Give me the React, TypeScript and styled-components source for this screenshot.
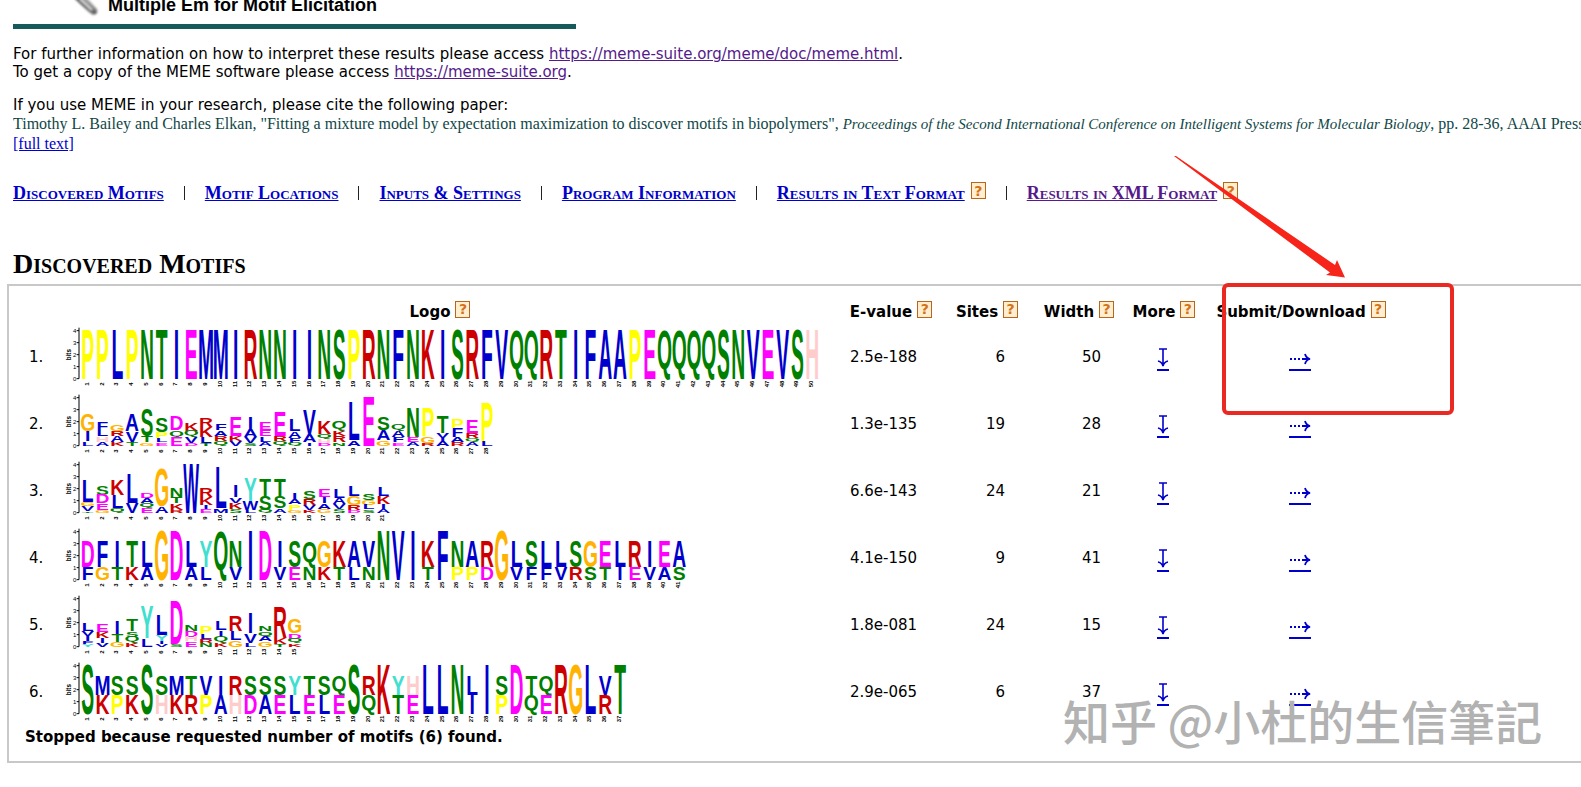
import React from "react";
import styled, { createGlobalStyle } from "styled-components";

const SANS = `"DejaVu Sans", Verdana, sans-serif`;
const SERIF = `"Liberation Serif", "Times New Roman", serif`;

const GlobalStyle = createGlobalStyle`
  *, *::before, *::after { box-sizing: border-box; }
  body {
    margin: 0;
    background: #fff;
    color: #000;
    font: 15px/18px ${SANS};
    overflow-x: hidden;
  }
`;

const Page = styled.main`
  position: relative;
  min-height: 100vh;
  overflow: hidden;
`;

const Intro = styled.div`
  padding-left: 13px;
`;

const Brand = styled.header`
  display: flex;
  align-items: flex-start;
  height: 24px;
  padding-left: 59px;
`;

const Tagline = styled.p`
  margin: 0 0 0 8px;
  font: bold 18px/10px "Liberation Sans", Arial, sans-serif;
  white-space: nowrap;
`;

const Rule = styled.div`
  width: 563px;
  max-width: 100%;
  height: 5px;
  margin-bottom: 1px;
  background: #165a5a;
`;

const Paragraph = styled.p`
  margin: 0;
  padding-top: 15px;
  white-space: nowrap;
`;

const Citation = styled.div`
  font: 16px/19px ${SERIF};
  color: #0f4747;
  white-space: nowrap;

  em { font-size: 15px; }
`;

const Link = styled.a<{ $visited?: boolean }>`
  color: ${(p) => (p.$visited ? "#551a8b" : "#0000cc")};
  text-decoration: underline;
`;

const Nav = styled.nav`
  display: flex;
  align-items: center;
  gap: 20px;
  height: 24px;
  margin-top: 28px;
  white-space: nowrap;
`;

const NavItem = styled.span`
  display: flex;
  align-items: center;
  gap: 6px;

  a {
    font: bold small-caps 18px/20px ${SERIF};
  }
`;

const Divider = styled.span`
  width: 1px;
  height: 14px;
  background: #222;
`;

const Heading = styled.h2`
  margin: 44px 0 0;
  font: bold small-caps 28px/30px ${SERIF};
`;

const HelpButton = styled.button`
  width: 15px;
  height: 17px;
  margin: 0 0 5px;
  padding: 0;
  border: 1px solid #b9651b;
  background: #ffefd0;
  color: #d2731a;
  font: bold 14px/14px ${SANS};
  cursor: pointer;
`;

const Panel = styled.section`
  margin: 5px 0 0 7px;
  padding: 0 0 14px 16px;
  border: 2px solid #c8c8c8;
  border-right: 0;
`;

const MotifTable = styled.table`
  width: 1374px;
  table-layout: fixed;
  border-collapse: collapse;

  th, td { padding: 0; }
  th:nth-child(2) { padding-right: 26px; }
  thead tr { height: 37px; }
  tbody tr { height: 67px; }
`;

const HeadLabel = styled.span`
  display: flex;
  align-items: center;
  justify-content: center;
  gap: 5px;
  padding-top: 14px;
  white-space: nowrap;
`;

const Cell = styled.td<{ $align?: string; $end?: number; $start?: number }>`
  && {
    text-align: ${(p) => p.$align ?? "left"};
    padding-right: ${(p) => p.$end ?? 0}px;
    padding-left: ${(p) => p.$start ?? 0}px;
  }
`;

const ArrowLink = styled.a`
  display: flex;
  justify-content: center;
  padding: 6px 2px 0 0;
  color: #0000cc;
`;

const Notice = styled.p`
  margin: 2px 0 0;
  line-height: 20px;
  font-weight: bold;
`;

const Highlight = styled.div`
  position: absolute;
  left: 1222px;
  top: 283px;
  width: 232px;
  height: 132px;
  border: 4px solid #ea2a22;
  border-radius: 6px;
  pointer-events: none;
`;

const Pointer = styled.svg`
  position: absolute;
  left: 1170px;
  top: 152px;
  pointer-events: none;
`;

const Watermark = styled.div`
  position: absolute;
  left: 1063px;
  top: 692px;
  font: 500 47px/56px "Noto Sans CJK SC", sans-serif;
  color: #b2b2b2;
  white-space: nowrap;
  pointer-events: none;
`;

const LogoDrawing = styled.svg`
  display: block;
  overflow: visible;
`;

const RESIDUE: Record<string, string> = {
  A: "#0000cc", C: "#0000cc", F: "#0000cc", I: "#0000cc", L: "#0000cc", V: "#0000cc", W: "#0000cc", M: "#0000cc",
  N: "#008000", Q: "#008000", S: "#008000", T: "#008000",
  D: "#ff00ff", E: "#ff00ff",
  K: "#cc0000", R: "#cc0000",
  H: "#ffcccc", G: "#ffb300", P: "#ffff00", Y: "#40e0d0",
};

/* One logo unit is a third of a pixel; 36 units are one bit. */
const PITCH = 44.36;
const FULL = 146;
const BASE = 167;
const AXIS = 42;
const GLYPH = 100;
const CAP = 68.8;
/* The tail of Q hangs below the baseline and counts towards its height. */
const TAIL = 18;

type Stack = [string, number][];

const single = (s: string): Stack[] => [...s].map((c) => [[c, FULL]]);
const pairs = (s: string, top: number, low: number): Stack[] =>
  s.split(" ").map((c) => (c.length === 1 ? [[c, FULL]] : [[c[0], top], [c[1], low]]));
const stacks = (s: string): Stack[] =>
  s.split("|").map((col) => col.trim().split(" ").map((t) => [t[0], Number(t.slice(1))] as [string, number]));

function SequenceLogo({ columns, label }: { columns: Stack[]; label: string }) {
  const width = Math.ceil((AXIS + 4 + columns.length * PITCH) / 3);
  return (
    <LogoDrawing width={width} height={67} viewBox={`0 0 ${width * 3} 201`} role="img" aria-label={label}>
      <g fontFamily="Liberation Sans, Arial, sans-serif" fontWeight="bold" textAnchor="middle">
        <path d={`M${AXIS} 14V${BASE}`} stroke="#000" strokeWidth="3" />
        <text transform="translate(17 95) rotate(-90)" fontSize="19">bits</text>
        {[0, 1, 2, 3, 4].map((n) => (
          <React.Fragment key={n}>
            <path d={`M${AXIS - 7} ${BASE - n * 36}h7`} stroke="#000" strokeWidth="3" />
            <text x={AXIS - 13} y={BASE - n * 36 + 6} fontSize="18" fontWeight="normal">{n}</text>
          </React.Fragment>
        ))}
        {columns.map((stack, i) => {
          const x = AXIS + 4 + (i + 0.5) * PITCH;
          let y = BASE - stack.reduce((sum, s) => sum + s[1], 0);
          return (
            <g key={i}>
              {stack.map(([c, h], k) => {
                y += h;
                const tail = c === "Q" ? TAIL : 0;
                const sx = c === "W" ? 0.5 : 0.58;
                const sy = (h - 1) / (CAP + tail);
                return (
                  <text key={k} transform={`translate(${x} ${y - tail * sy}) scale(${sx} ${sy})`} fontSize={GLYPH} fill={RESIDUE[c]}>
                    {c}
                  </text>
                );
              })}
              <text transform={`translate(${x + 3} ${BASE + 16}) rotate(-90)`} fontSize="18">{i + 1}</text>
            </g>
          );
        })}
      </g>
    </LogoDrawing>
  );
}

const MOTIFS = [
  { evalue: "2.5e-188", sites: 6, width: 50, columns: single("PPLPNTIEMMIRNNIINSPRNFNKISRFVQQRTIFAAPEQQQQSNVEVSH") },
  {
    evalue: "1.3e-135", sites: 19, width: 28,
    columns: stacks(
      "G50 I30 L13|F24 L18 H16 A12|G18 R14 A18 K12|A50 V32 T12|S80 T20 G10|S44 P20 L12 E10|D42 Q20 E26|K24 Q18 V18 D9|R28 K30 L18 T8|F20 A16 R16 Q14|E58 K14 V14|I38 A22 V18 S8|E24 E20 L16 A12|E72 R14 Q14|L36 A20 F16 Q8|V74 A24 I10|K38 Q14 H12 D9|Q28 K16 R18 N10|L116 A16|E146|S38 A30 G16|Q20 A20 F16 E10|N90 E14 A12|P84 G20 R9|T50 V16 I8 A14|P26 F26 A14 R12|E38 R14 Q12 A12|P116 L14"
    ),
  },
  {
    evalue: "6.6e-143", sites: 24, width: 21,
    columns: stacks(
      "L64 G12 V14 T6|S28 D26 E20 G8|K46 L40 Q14|L90 V30|D14 A16 Q14 E14|G110 A20|N28 T20 K20 R8|W147|R26 K24 I12 E12|L122 M13|I34 V16 K18 S12|Y70 W26 L9|T52 S42 Q9|T54 S34 A13|I18 A16 P16 G9|S24 R18 V14 K9|E22 I20 A16 G12|L26 A18 V14 S12|L32 G26 R14 D9|S18 G14 L14 S10|L28 K24 I14 A12"
    ),
  },
  {
    evalue: "4.1e-150", sites: 9, width: 41,
    columns: pairs("DF FG IT TK LA G D LA YL Q NV I D IV SE QN GK KT AL VN N V I KT F NP AP RD G LV SF LF LV SR GS ET LI RE IV EA AS", 78, 38),
  },
  {
    evalue: "1.8e-081", sites: 24, width: 15,
    columns: stacks(
      "L24 V16 I14 F10 Y8|E24 K18 I14 V12|I40 T24 G14|T34 S16 Q18 K12|Y96 L25|L60 Y18 I10 V8|D132 S7|N18 D18 H14 E16|P24 L14 R12 N12|L26 I20 Q18 K12|R46 L26 G20|I62 V28 L12|N16 Q16 A14 G16|R92 K18 T8|G44 D16 Q14 K10"
    ),
  },
  {
    evalue: "2.9e-065", sites: 6, width: 37,
    columns: pairs("S MK SP SK S SH MK TR VP IA RH SD SA SE YL TE SL QE S RQ K YT HE L L N LI I SP D TQ QE R G L VR T", 58, 57),
  },
];

const NAV = [
  { label: "Discovered Motifs" },
  { label: "Motif Locations" },
  { label: "Inputs & Settings" },
  { label: "Program Information" },
  { label: "Results in Text Format", help: true },
  { label: "Results in XML Format", help: true, visited: true },
];

const COLUMN_WIDTHS = [40, 776, 100, 92, 92, 78, 196];

const Help = ({ topic }: { topic: string }) => <HelpButton type="button" aria-label={`Help: ${topic}`}>?</HelpButton>;

const DownArrow = () => (
  <svg width="12" height="23" viewBox="0 0 12 23" fill="none" stroke="currentColor" strokeWidth="2" aria-hidden="true">
    <path d="M2 1h8M6 1v16M1 13q4 1 5 5q1-4 5-5" strokeWidth="1.6" />
    <path d="M0 22h12" />
  </svg>
);

const RightArrow = () => (
  <svg width="22" height="23" viewBox="0 0 22 23" fill="none" stroke="currentColor" strokeWidth="2" aria-hidden="true">
    <path d="M1 11h2M5 11h2M9 11h2M13 11h7M16 6q1 4 5 5q-4 1-5 5" strokeWidth="1.8" />
    <path d="M0 22h22" />
  </svg>
);

export default function App() {
  return (
    <>
      <GlobalStyle />
      <Page>
        <Intro>
          <Brand>
            <svg width="28" height="17" viewBox="0 0 28 17" aria-hidden="true">
              <defs>
                <linearGradient id="pen" x1="0" y1="1" x2="1" y2="0">
                  <stop offset="0.3" stopColor="#d8d8d8" />
                  <stop offset="0.5" stopColor="#555" />
                  <stop offset="0.7" stopColor="#aaa" />
                </linearGradient>
                <filter id="soft"><feGaussianBlur stdDeviation="0.8" /></filter>
              </defs>
              <g filter="url(#soft)">
                <path d="M2 -2H15L25 9Q27 14 21 15Q18 14 2 -2Z" fill="url(#pen)" />
                <path d="M8 -1L20 10" stroke="#ddd" strokeWidth="2" />
              </g>
            </svg>
            <Tagline>Multiple Em for Motif Elicitation</Tagline>
          </Brand>
          <Rule />
          <Paragraph>
            For further information on how to interpret these results please access{" "}
            <Link $visited href="https://meme-suite.org/meme/doc/meme.html">https://meme-suite.org/meme/doc/meme.html</Link>.
            <br />
            To get a copy of the MEME software please access{" "}
            <Link $visited href="https://meme-suite.org">https://meme-suite.org</Link>.
          </Paragraph>
          <Paragraph>If you use MEME in your research, please cite the following paper:</Paragraph>
          <Citation>
            Timothy L. Bailey and Charles Elkan, "Fitting a mixture model by expectation maximization to discover motifs in biopolymers",{" "}
            <em>Proceedings of the Second International Conference on Intelligent Systems for Molecular Biology</em>, pp. 28-36, AAAI Press
            <br />
            <Link href="#fulltext">[full text]</Link>
          </Citation>
          <Nav>
            {NAV.map((item, i) => (
              <React.Fragment key={item.label}>
                {i > 0 && <Divider />}
                <NavItem>
                  <Link $visited={item.visited} href="#section">{item.label}</Link>
                  {item.help && <Help topic={item.label} />}
                </NavItem>
              </React.Fragment>
            ))}
          </Nav>
          <Heading>Discovered Motifs</Heading>
        </Intro>
        <Panel>
          <MotifTable>
            <colgroup>
              {COLUMN_WIDTHS.map((w, i) => <col key={i} width={w} />)}
            </colgroup>
            <thead>
              <tr>
                <th />
                {["Logo", "E-value", "Sites", "Width", "More", "Submit/Download"].map((h) => (
                  <th key={h} scope="col"><HeadLabel>{h}<Help topic={h} /></HeadLabel></th>
                ))}
              </tr>
            </thead>
            <tbody>
              {MOTIFS.map((m, i) => (
                <tr key={m.evalue}>
                  <Cell $start={4}>{i + 1}.</Cell>
                  <Cell><SequenceLogo columns={m.columns} label={`Motif ${i + 1} logo`} /></Cell>
                  <Cell $start={9}>{m.evalue}</Cell>
                  <Cell $align="right" $end={28}>{m.sites}</Cell>
                  <Cell $align="right" $end={24}>{m.width}</Cell>
                  <Cell><ArrowLink href="#more" aria-label="More"><DownArrow /></ArrowLink></Cell>
                  <Cell><ArrowLink href="#submit" aria-label="Submit or download"><RightArrow /></ArrowLink></Cell>
                </tr>
              ))}
            </tbody>
          </MotifTable>
          <Notice>Stopped because requested number of motifs (6) found.</Notice>
        </Panel>
        <Highlight />
        <Pointer width="180" height="130" viewBox="0 0 180 130" aria-hidden="true">
          <path d="M4 4L6 4L165 113L167 108L175 125.500L156 123L160 120.500Z" fill="#f7241a" />
        </Pointer>
        <Watermark>知乎 @小杜的生信筆記</Watermark>
      </Page>
    </>
  );
}
